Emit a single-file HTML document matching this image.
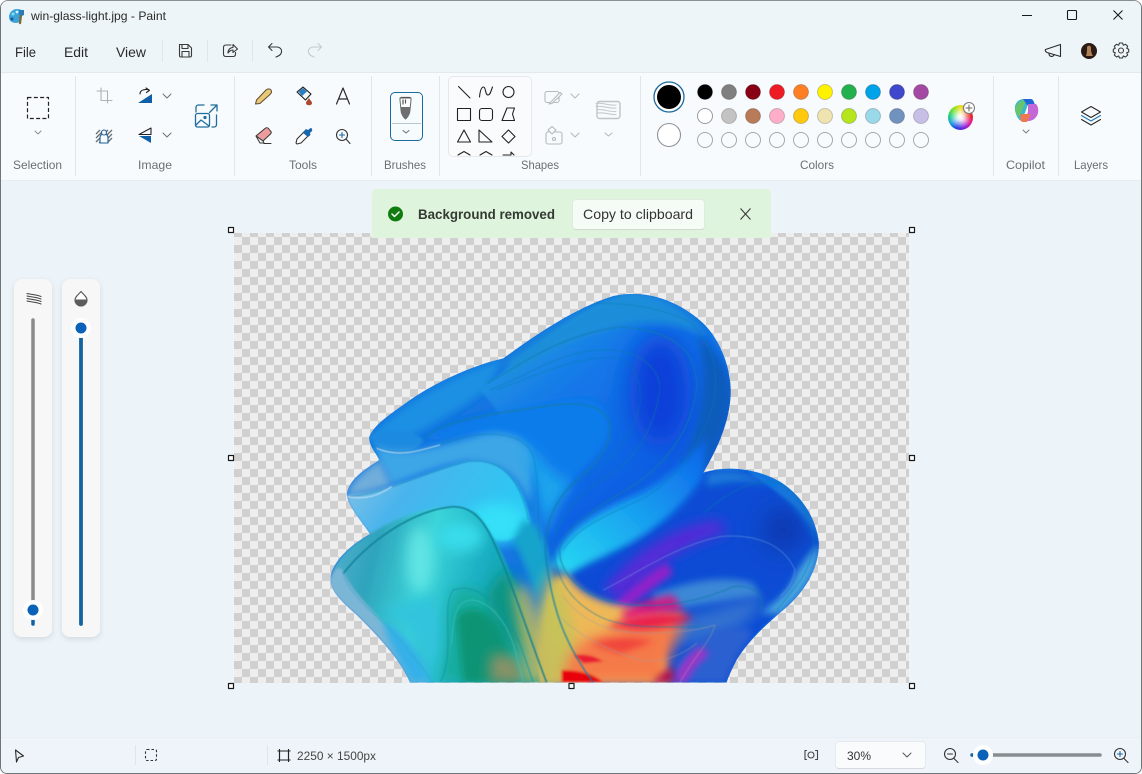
<!DOCTYPE html>
<html><head><meta charset="utf-8"><title>win-glass-light.jpg - Paint</title>
<style>
html,body{margin:0;padding:0;background:#fff;}
body{width:1142px;height:774px;overflow:hidden;position:relative;font-family:"Liberation Sans",sans-serif;}
#win{position:absolute;left:0;top:0;width:1142px;height:774px;box-sizing:border-box;border:1px solid #6f767a;border-top-color:#8b8f92;border-radius:8px 8px 7px 7px;overflow:hidden;background:#edf4f9;}
.abs{position:absolute;}
#title{left:0;top:0;width:1142px;height:71px;background:#eef5f8;}
#ribbon{left:0;top:71px;width:1142px;height:109px;background:#f8fbfe;border-top:1px solid #e3e8eb;border-bottom:1px solid #e8edf1;box-sizing:border-box;}
#canvasbg{left:0;top:180px;width:1142px;height:557px;background:#edf4f9;}
#status{left:0;top:736px;width:1142px;height:38px;background:#eef4f9;border-top:1px solid #e9eff4;box-sizing:border-box;}
#checker{left:233px;top:232px;width:675px;height:450px;background-color:#eeeeee;background-image:repeating-conic-gradient(#d0d0d0 0 25%,#eeeeee 0 50%);background-size:16px 16px;background-position:0 4px;}
#notif{left:371px;top:188px;width:399px;height:49px;background:#dff4dd;border-radius:4px 4px 0 0;}
#copybtn{left:571px;top:198px;width:133px;height:31px;box-sizing:border-box;background:#f5fcf5;border:1px solid #e0ebe0;border-bottom-color:#cfdccf;border-radius:4px;}
.panel{background:#f7f7f7;border-radius:8px;box-shadow:0 2px 6px rgba(60,80,100,.16);}
#p1{left:13px;top:278px;width:38px;height:358px;}
#p2{left:61px;top:278px;width:38px;height:358px;}
#shapes{left:447px;top:75px;width:84px;height:81px;box-sizing:border-box;background:#f9fbfd;border:1px solid #e6e9ec;border-radius:5px;}
#brush{left:389px;top:91px;width:33px;height:49px;box-sizing:border-box;background:#f6fbfe;border:1px solid #1b6a9e;border-radius:5px;}
#zoomsel{left:834px;top:740px;width:91px;height:28px;box-sizing:border-box;background:#f9fbfd;border:1px solid #e6eaee;border-bottom-color:#d6dade;border-radius:4px;}
#wheel{left:947px;top:104px;width:25px;height:25px;border-radius:50%;background:radial-gradient(circle,#fff 0,rgba(255,255,255,.85) 18%,rgba(255,255,255,0) 62%),conic-gradient(from 0deg,#f0e020,#f08020,#e82020,#e020a0,#8020e0,#2040e0,#20a0e0,#20d080,#80e020,#f0e020);}
#art{left:319px;top:279px;width:510px;height:410px;}
svg text{font-family:"Liberation Sans",sans-serif;}
</style></head><body>
<div id="win">
<div class="abs" id="title"></div>
<div class="abs" id="ribbon"></div>
<div class="abs" id="canvasbg"></div>
<div class="abs" id="status"></div>
<div class="abs" id="checker"></div>

<svg class="abs" id="art" width="510" height="410" viewBox="0 0 1530 1230">
<defs>
<clipPath id="sil"><path d="M270 1208C240 1140 190 1085 110 1005C60 960 25 930 32 885C45 835 100 790 150 762C125 725 85 680 80 645C85 600 130 570 178 540C165 515 145 495 148 470C165 430 215 400 270 360C350 305 460 255 550 235C640 170 760 85 880 48C980 25 1080 65 1150 130C1210 190 1235 280 1232 345C1228 430 1190 510 1150 578C1220 555 1310 565 1380 605C1450 650 1490 720 1497 790C1497 870 1450 940 1390 990C1330 1040 1280 1090 1250 1140C1235 1170 1225 1190 1220 1208Z"/></clipPath>
<filter id="b4" x="-10%" y="-10%" width="120%" height="120%"><feGaussianBlur stdDeviation="4"/></filter>
<filter id="b1" x="-5%" y="-5%" width="110%" height="110%"><feGaussianBlur stdDeviation="1.5"/></filter>
<filter id="b10" x="-30%" y="-30%" width="160%" height="160%"><feGaussianBlur stdDeviation="10"/></filter>
<filter id="b20" x="-40%" y="-40%" width="180%" height="180%"><feGaussianBlur stdDeviation="20"/></filter>
<filter id="b40" x="-60%" y="-60%" width="220%" height="220%"><feGaussianBlur stdDeviation="40"/></filter>
<filter id="b60" x="-80%" y="-80%" width="260%" height="260%"><feGaussianBlur stdDeviation="60"/></filter>
<linearGradient id="up" x1="0.2" y1="0" x2="0.75" y2="0.75"><stop offset="0" stop-color="#2aa0e0"/><stop offset=".4" stop-color="#1478e8"/><stop offset="1" stop-color="#0c58e0"/></linearGradient>
<linearGradient id="band" x1="0" y1="0" x2="1" y2="0.3"><stop offset="0" stop-color="#8cc4e6"/><stop offset=".4" stop-color="#49b4ec"/><stop offset="1" stop-color="#2cc8f4"/></linearGradient>
<linearGradient id="teal" x1="0" y1="0" x2="1" y2="0.2"><stop offset="0" stop-color="#5cb0d0"/><stop offset=".25" stop-color="#2ea4bc"/><stop offset=".5" stop-color="#3cd4d8"/><stop offset=".75" stop-color="#1cb0c4"/><stop offset="1" stop-color="#0a9aa0"/></linearGradient>
<linearGradient id="fan" x1="0" y1="1" x2="1" y2="0"><stop offset="0" stop-color="#28dcf2"/><stop offset=".5" stop-color="#18a0f0"/><stop offset="1" stop-color="#0c60ea"/></linearGradient>
</defs>
<g clip-path="url(#sil)">
<g filter="url(#b4)">
<rect x="0" y="0" width="1530" height="1230" fill="#1274e0"/>
<path d="M480 330C600 240 760 80 930 40C1080 40 1240 200 1232 345C1228 500 1150 620 1000 720C880 800 760 820 700 860C640 700 640 500 480 330Z" fill="url(#up)"/>
<ellipse cx="1020" cy="330" rx="90" ry="170" fill="#0a3cd8" filter="url(#b40)"/>
<path d="M1130 160C1190 220 1235 280 1232 345C1228 430 1190 510 1150 578L1080 560C1150 430 1170 280 1130 160Z" fill="#0a5cbc" filter="url(#b10)"/>
<path d="M560 240C680 160 800 60 930 40C1040 50 1120 100 1160 170C1020 90 800 120 560 300Z" fill="#1f8fd8" opacity=".9" filter="url(#b10)"/>
<path d="M148 470C215 400 350 300 550 235L500 330C420 390 310 450 180 520Z" fill="#1f90e2" filter="url(#b10)"/>
<path d="M320 470C430 410 620 380 770 360C850 350 880 420 860 480C820 560 740 600 680 690C660 600 620 480 480 470C420 460 360 480 320 480Z" fill="#0f7ceb" filter="url(#b10)"/>
<path d="M150 470C190 440 280 450 310 480C300 510 230 530 175 510Z" fill="#1f8ae0"/>
<path d="M178 540C170 515 165 510 170 500C260 535 380 490 500 460C590 450 630 490 640 530L630 680C600 590 540 540 430 545C350 560 280 590 215 615Z" fill="#3ea6e6" filter="url(#b10)"/>
<path d="M610 480C680 560 720 620 760 600C720 660 690 700 680 780C660 700 640 580 610 480Z" fill="#1aa4ec" filter="url(#b20)"/>
<path d="M80 645C200 640 330 570 440 545C540 530 610 600 630 730C590 790 520 810 450 720C380 680 260 700 150 762C120 725 85 680 80 645Z" fill="url(#band)"/>
<path d="M80 640C100 590 150 560 178 540L215 615C170 630 130 640 85 650Z" fill="#7ab4da" filter="url(#b10)" opacity=".9"/>
<ellipse cx="530" cy="730" rx="90" ry="60" fill="#35e0f8" filter="url(#b20)"/>
<path d="M610 720C650 730 680 760 690 880L650 960C630 880 600 820 580 780Z" fill="#14a4cc" filter="url(#b10)"/>
<path d="M700 860C780 780 1000 700 1160 570L1280 570C1340 620 1490 700 1497 790C1497 870 1450 940 1390 990C1300 1060 1250 1130 1220 1208L800 1208C720 1100 700 960 700 860Z" fill="#0c4cd4"/>
<ellipse cx="1390" cy="750" rx="60" ry="60" fill="#0a34a8" filter="url(#b40)"/>
<path d="M1160 580C1260 550 1400 600 1497 790C1497 760 1470 690 1400 630C1320 600 1240 600 1160 620Z" fill="#1e78d8" filter="url(#b10)"/>
<path d="M1430 880C1460 830 1490 800 1497 790C1495 880 1450 940 1380 1000L1320 1000C1380 960 1410 930 1430 880Z" fill="#4aa8e0" filter="url(#b10)"/>
<path d="M700 860C720 760 820 700 960 640C1060 590 1110 520 1160 470L1150 590C1090 680 1000 760 880 815C830 840 780 860 745 885Z" fill="url(#fan)" filter="url(#b10)"/>
<path d="M850 930C920 840 1040 740 1200 720L1220 760C1100 780 990 870 900 960Z" fill="#6a24d8" opacity=".85" filter="url(#b20)"/>
<path d="M880 975C950 910 1000 870 1040 850L1060 880C1010 915 950 965 900 995Z" fill="#b414c8" opacity=".8" filter="url(#b10)"/>
<path d="M1000 940C1100 910 1200 880 1300 910L1320 950C1220 960 1100 980 1000 1000Z" fill="#5cb0d8" opacity=".6" filter="url(#b10)"/>
<path d="M1060 1020C1150 1000 1250 960 1330 950C1320 1010 1240 1060 1180 1090L1050 1090Z" fill="#3070d0" filter="url(#b20)"/>
<path d="M740 880C780 950 860 980 1000 990L1100 1000C1040 1030 1000 1100 1060 1208L640 1208C660 1100 680 960 700 900Z" fill="#eeb858" filter="url(#b10)"/>
<path d="M700 860C740 950 760 1000 780 1208L620 1208C640 1100 650 960 700 860Z" fill="#c8c25a" filter="url(#b20)"/>
<path d="M780 1090C860 1050 980 1020 1100 1020C1070 1080 1040 1130 1030 1208L730 1208C730 1160 750 1120 780 1090Z" fill="#f57a48" filter="url(#b20)"/>
<path d="M860 1040C950 1000 1040 990 1120 1010C1090 1030 1020 1050 950 1050Z" fill="#e8104c" filter="url(#b10)" opacity=".85"/>
<path d="M900 1000C950 970 1000 950 1060 945L1090 990C1020 1000 960 1010 920 1020Z" fill="#e0107c" filter="url(#b10)" opacity=".85"/>
<path d="M810 1090C880 1070 950 1070 1000 1085L900 1120Z" fill="#f03038" opacity=".75" filter="url(#b10)"/>
<path d="M725 1170C780 1170 830 1185 850 1208L725 1208Z" fill="#e80010"/>
<path d="M760 1125C800 1120 830 1130 850 1145L790 1150Z" fill="#e81030" opacity=".9"/>
<path d="M1040 1208C1070 1140 1110 1100 1180 1050C1240 1040 1280 1040 1300 1060C1260 1110 1230 1160 1220 1208Z" fill="#2a60d0" filter="url(#b10)"/>
<path d="M1060 1208C1080 1150 1110 1120 1140 1100L1170 1120C1130 1150 1110 1180 1100 1208Z" fill="#a030c8" filter="url(#b10)"/>
<path d="M1000 1208C1020 1180 1040 1170 1060 1160L1060 1208Z" fill="#b00850" filter="url(#b10)"/>
<path d="M30 900C45 835 100 790 150 762C260 690 400 660 470 700C530 770 590 900 650 1100L660 1208L270 1208C240 1140 190 1085 110 1005C60 960 25 930 32 885Z" fill="url(#teal)"/>
<path d="M30 900C40 870 60 850 72 880C110 960 180 1000 240 1100C270 1150 300 1190 330 1208L270 1208C240 1140 190 1085 110 1005C60 960 25 930 30 900Z" fill="#7cb6d6"/>
<path d="M190 1020C260 1060 320 1140 340 1208L270 1208C240 1140 200 1090 190 1020Z" fill="#34b0e8" filter="url(#b10)"/>
<ellipse cx="300" cy="840" rx="40" ry="100" fill="#60e4e4" filter="url(#b20)"/>
<ellipse cx="420" cy="770" rx="70" ry="45" fill="#38dcea" filter="url(#b20)"/>
<path d="M180 1000C240 1020 320 1090 340 1208L380 1208C400 1100 360 1000 350 950C280 950 220 970 180 1000Z" fill="#30c4dc" filter="url(#b20)"/>
<path d="M350 1208C400 1080 360 950 420 925C490 910 570 990 600 1100L640 1208Z" fill="#18ac9e" filter="url(#b20)"/>
<path d="M410 1010C440 970 510 980 550 1060L590 1208L430 1208Z" fill="#0a9474" filter="url(#b10)"/>
<path d="M510 1130C550 1110 600 1120 620 1208L510 1208Z" fill="#8a9268" filter="url(#b20)"/>
<path d="M500 960C520 880 560 860 590 900L640 1100L560 1100Z" fill="#0a9484" filter="url(#b20)"/>
<path d="M620 920C650 980 680 1100 700 1208L620 1208C610 1100 590 1000 580 920Z" fill="#c8b860" filter="url(#b20)" opacity=".85"/>
</g>
<g fill="none" stroke="#0f7ca8" stroke-opacity=".45" stroke-width="3" filter="url(#b1)">
<path d="M170 500C260 540 330 500 440 470C540 450 620 470 640 530C660 620 650 700 660 780"/>
<path d="M85 650C200 640 300 580 440 545C540 530 600 590 625 720"/>
<path d="M70 880C150 780 280 690 400 680C480 680 510 760 540 830C590 950 620 1050 680 1208" stroke="#0a7c90" stroke-opacity=".85" stroke-width="5"/>
<path d="M315 480C330 440 450 410 600 390C720 370 840 350 870 430C880 520 790 580 740 630C680 700 670 780 680 850C700 1000 740 1100 820 1208" stroke-width="5" stroke-opacity=".7"/>
<path d="M500 310C600 260 700 170 900 140C1000 150 1130 170 1130 320C1120 430 1050 560 900 640C820 690 740 740 720 800C710 880 790 950 900 970C1030 990 1150 960 1240 920C1310 910 1340 960 1320 990" stroke-width="4" stroke-opacity=".6"/>
<path d="M510 330C640 280 740 200 880 210C970 220 1020 270 1020 330C1000 450 950 540 860 590C780 640 720 710 700 780C700 880 740 960 840 1010C920 1050 1050 1040 1180 1040" stroke-width="3" stroke-opacity=".55"/>
<path d="M530 330C640 290 780 220 900 235C950 260 965 320 960 370C945 450 890 530 800 590"/>
<path d="M700 90C800 60 960 60 1100 120C1170 170 1195 260 1185 340C1170 440 1100 570 980 650C880 700 780 730 730 810"/>
<path d="M720 1010C780 1070 860 1110 960 1140C1020 1150 1080 1130 1130 1090" stroke="#a0a0a0"/>
<path d="M730 950C790 1030 880 1060 980 1060C1060 1060 1140 1050 1185 1035C1170 1090 1120 1130 1080 1208" stroke="#a0a0a0"/>
<path d="M1150 700C1210 650 1280 600 1360 605C1440 630 1480 720 1480 800C1470 880 1420 930 1370 990" stroke-width="3.500"/>
<path d="M850 930C950 880 1060 800 1200 770C1300 760 1390 790 1425 870C1420 900 1410 920 1380 950" stroke="#7ab0e0"/>
<path d="M360 1208C410 1120 360 980 400 930C480 900 570 1000 610 1120L640 1208" stroke="#1294a4" stroke-opacity=".8"/>
<path d="M395 1090C400 1000 410 960 460 960C520 970 570 1040 590 1130L610 1208" stroke="#40c0c0" stroke-opacity=".7"/>
<path d="M70 880C85 950 180 1010 240 1080C290 1140 320 1180 340 1208" stroke="#30a0c8"/>
<path d="M80 650C130 660 170 650 215 620M170 505C240 535 300 510 360 495" stroke="#e8f4fc" stroke-opacity=".7"/>
</g>
</g>
</svg>

<div class="abs" id="notif"></div>
<div class="abs" id="copybtn"></div>
<div class="abs panel" id="p1"></div>
<div class="abs panel" id="p2"></div>
<div class="abs" id="shapes"></div>
<div class="abs" id="brush"></div>
<div class="abs" id="zoomsel"></div>
<div class="abs" id="wheel"></div>

<svg class="abs" style="left:-1px;top:-1px" width="1142" height="774" viewBox="0 0 1142 774" fill="none" stroke-linecap="round" stroke-linejoin="round">
<!-- app icon -->
<path d="M9 17C9 12 13 9 17 9C21 9 24 11 24 14C24 16 21 16 20 18C20 20 20 23 16 23C12 23 9 21 9 17Z" fill="#3ba3d8" stroke="none"/>
<circle cx="13" cy="14" r="1.500" fill="#7fe0e8"/><circle cx="17" cy="12" r="1.400" fill="#d8f0f8"/><circle cx="12" cy="19" r="1.500" fill="#185a9e"/>
<path d="M21 14L20 23" stroke="#7a6a3a" stroke-width="2.400"/><rect x="19" y="10" width="5" height="5" fill="#2c7cb8" stroke="none"/>

<!-- text -->
<g stroke="none" fill="#2a2a2a">
<text x="31" y="20" font-size="12" textLength="135" lengthAdjust="spacingAndGlyphs">win-glass-light.jpg - Paint</text>
<text x="15" y="57" font-size="14" textLength="21" lengthAdjust="spacingAndGlyphs">File</text>
<text x="64" y="57" font-size="14" textLength="24" lengthAdjust="spacingAndGlyphs">Edit</text>
<text x="116" y="57" font-size="14" textLength="30" lengthAdjust="spacingAndGlyphs">View</text>
</g>
<g stroke="none" fill="#6a6f73" font-size="12">
<text x="13" y="169" textLength="49" lengthAdjust="spacingAndGlyphs">Selection</text>
<text x="138" y="169" textLength="34" lengthAdjust="spacingAndGlyphs">Image</text>
<text x="289" y="169" textLength="28" lengthAdjust="spacingAndGlyphs">Tools</text>
<text x="384" y="169" textLength="42" lengthAdjust="spacingAndGlyphs">Brushes</text>
<text x="521" y="169" textLength="38" lengthAdjust="spacingAndGlyphs">Shapes</text>
<text x="800" y="169" textLength="34" lengthAdjust="spacingAndGlyphs">Colors</text>
<text x="1006" y="169" textLength="39" lengthAdjust="spacingAndGlyphs">Copilot</text>
<text x="1074" y="169" textLength="34" lengthAdjust="spacingAndGlyphs">Layers</text>
</g>
<text x="418" y="219" font-size="13.500" font-weight="bold" fill="#333a33" stroke="none" textLength="137" lengthAdjust="spacingAndGlyphs">Background removed</text>
<text x="583" y="219" font-size="14" fill="#333" stroke="none" textLength="110" lengthAdjust="spacingAndGlyphs">Copy to clipboard</text>
<text x="297" y="760" font-size="12" fill="#444" stroke="none" textLength="79" lengthAdjust="spacingAndGlyphs">2250 × 1500px</text>
<text x="847" y="760" font-size="12" fill="#333" stroke="none" textLength="24" lengthAdjust="spacingAndGlyphs">30%</text>

<!-- dividers -->
<g stroke="#e1e6ea" stroke-linecap="butt">
<path d="M162.500 40V62M207.500 40V62M252.500 40V62"/>
<path d="M75.500 76V176M234.500 76V176M371.500 76V176M439.500 76V176M640.500 76V176M993.500 76V176M1058.500 76V176"/>
<path d="M135.500 745V765M267.500 745V765" stroke="#dfe5ea"/>
</g>

<!-- quick access -->
<g stroke="#3a3a3a" stroke-width="1.100">
<path d="M179.500 44.500H188L191.500 48V55.500C191.500 56.500 191 57 190 57H181C180 57 179.500 56.500 179.500 55.500Z"/><path d="M182 44.500V48.500H188V44.500M182 57V51.500H189V57"/>
<path d="M231 45H226C224.500 45 223.500 46 223.500 47.500V54C223.500 55.500 224.500 56.500 226 56.500H233C234.500 56.500 235.500 55.500 235.500 54V52.500"/>
<path d="M228 53C228 49.500 230.500 47.500 233 47.500V44.500L237.500 49L233 52.500V50C231 50 229.500 51 228 53Z"/>
<path d="M272 43.500L268.500 47L272 50.500M268.500 47H277C280 47 282 49.500 281.500 52C281 55 278.500 56 276 57"/>
<path d="M318 43.500L321.500 47L318 50.500M321.500 47H313C310 47 308 49.500 308.500 52C309 55 311.500 56 314 57" stroke="#c6cacd"/>
</g>

<!-- window controls -->
<g stroke="#1a1a1a" stroke-width="1.100" stroke-linecap="butt">
<path d="M1022 15.500H1032"/>
<rect x="1067.500" y="10.500" width="9" height="9" rx="1"/>
<path d="M1113.500 10.500L1122.500 19.500M1122.500 10.500L1113.500 19.500"/>
</g>
<!-- megaphone, avatar, gear -->
<g stroke="#2b2b2b" stroke-width="1.100">
<path d="M1045.500 49.500L1060.500 44.500V56.500L1047 52.500C1045 51.500 1045 50 1045.500 49.500Z"/><path d="M1049 53.500C1049 57.500 1054 57 1054 54.500"/>
</g>
<circle cx="1089" cy="51" r="8" fill="#2a1c14" stroke="none"/><path d="M1087 47C1088 45 1091 45 1091 48C1091 50 1091 53 1093 56H1086C1087 53 1087 50 1087 47Z" fill="#b08058" stroke="none"/>
<g stroke="#3a3a3a" stroke-width="1.100">
<circle cx="1121" cy="50.500" r="2.500"/>
<path d="M1119.500 43H1122.500L1123.300 45.200L1125.500 44.300L1127.700 46.300L1126.700 48.400L1128.700 49.300V52L1126.700 52.800L1127.700 55L1125.500 57L1123.300 56L1122.500 58H1119.500L1118.700 56L1116.500 57L1114.300 55L1115.300 52.800L1113.300 52V49.300L1115.300 48.400L1114.300 46.300L1116.500 44.300L1118.700 45.200Z"/>
</g>

<!-- selection -->
<rect x="27.500" y="97.500" width="21" height="21" stroke="#222" stroke-width="1.200" stroke-dasharray="4 2.300" stroke-linecap="butt"/>
<path d="M35 131L38 134L41 131" stroke="#8a8f92"/>

<!-- image group -->
<g stroke="#aeb2b5" stroke-width="1.100"><path d="M97 91H107.500V103M101 88V100.500H112"/></g>
<path d="M138 103L152 94V103Z" fill="#0f5ea8" stroke="none"/>
<path d="M140 94C140 89 147 89 149 90M146 88L149.500 90.300L146.500 92.500" stroke="#222" stroke-width="1.100"/>
<path d="M163 94L167 98L171 94M163 133L167 137L171 133" stroke="#6e7376"/>
<path d="M151 128L139 134.500H151Z" stroke="#222" stroke-width="1.100"/>
<path d="M139 136H151V143Z" fill="#0f5ea8" stroke="none"/>
<g stroke="#6a6f72" stroke-width="1.300" stroke-linecap="butt"><path d="M96 134L100 130M96 138L104 130M96 142L108 130M99 143L112 130M103 143L112 134M107 143L112 138"/></g>
<path d="M100 143V138C100 135 102 134 104 134C106 134 108 135 108 138V143Z" fill="#f8fbfe" stroke="#1a5f96" stroke-width="1.100"/>
<circle cx="104" cy="132.500" r="2.500" fill="#f8fbfe" stroke="#1a5f96" stroke-width="1.100"/>
<g stroke="#1f6d9e" stroke-width="1.300">
<path d="M196 112V107.500C196 106 197 105 198.500 105H204"/>
<path d="M212 127H214C215.500 127 216.500 126 216.500 124.500V115"/>
<path d="M211 105H217V111M217 105L209.500 112.500"/>
<rect x="195.500" y="113.500" width="14" height="13.500" rx="2"/>
<path d="M196 125L201 120L209 126"/><circle cx="205" cy="117.500" r="1" fill="#1f6d9e"/>
</g>

<!-- tools -->
<path d="M255.500 104L256.500 100L266 90C267.500 88.500 270 88.500 271 90C272 91.500 271.500 93 270 94.500L260 103.500Z" fill="#e9c877" stroke="#5a4c30" stroke-width="1"/>
<path d="M297 92L303 87L311 94L305.500 100Z" fill="#f4f6f8" stroke="#1c1c1c" stroke-width="1.100"/>
<path d="M298.500 91.500L303 88L307 91.500L302 96Z" fill="#2a7ec4" stroke="none"/>
<path d="M309 98C308 100 306 101.500 306 103C306 106 312 106 312 103C312 101.500 310 100 309 98Z" fill="#a8492c" stroke="none"/>
<path d="M336.500 104L343 88L349.500 104M338.800 99H347.200" stroke="#2a2a2a" stroke-width="1.200"/>
<path d="M256 136L265 128.500C266 127.500 267.500 127.500 268.500 128.500L270.500 131C271.500 132 271.500 133 270.500 134L263 141Z" fill="#ec9c9c" stroke="#333" stroke-width="1"/>
<path d="M256 136L260 143H264L263 141Z" fill="#f5f5f5" stroke="#333" stroke-width="1"/><path d="M264 143.500H271" stroke="#333"/>
<path d="M297 144L296 143L297 139L304 132L308 136L301 143Z" fill="#fff" stroke="#333" stroke-width="1.100"/>
<path d="M302.500 132.500L306 129L308 130L310.500 128C312 128 312.500 129.500 312 131L310 133L310.500 135L308 137Z" fill="#1a66a8" stroke="none"/>
<g stroke="#333" stroke-width="1.100"><circle cx="342" cy="135" r="5.500"/><path d="M346 139L350 143.500"/><path d="M342 132.500V137.500M339.500 135H344.500" stroke="#1a66a8"/></g>

<!-- brush -->
<path d="M400 98H411V100L410 110C410 114 407 118 405.500 119C404 118 401 114 401 110L400 100Z" fill="#fff" stroke="#666" stroke-width="1"/>
<path d="M401 107H410L410 110C410 114 407 118 405.500 119C404 118 401 114 401 110Z" fill="#6f6f6f" stroke="none"/>
<path d="M401 97.500H410M403 100V104M405.500 100V103" stroke="#555" stroke-width="1.200"/>
<path d="M392 123.500H421" stroke="#b9c6ce" stroke-linecap="butt"/>
<path d="M403 130.500L406 133L409 130.500" stroke="#6a7073"/>

<!-- shapes -->
<g stroke="#222" stroke-width="1.100">
<path d="M458.500 86.500L470 98"/>
<path d="M479.500 97C480 92 481 87 483.500 87C486 87 485 95 488 95C490.500 95 491.500 89 492.500 87"/>
<circle cx="508.500" cy="92" r="5.500"/>
<rect x="457.500" y="108.500" width="13" height="12"/>
<rect x="479.500" y="108.500" width="13" height="12" rx="2.500"/>
<path d="M502 120.500L507 108H514.500L512.500 114L514.500 120.500Z"/>
<path d="M464 130L470.500 142H457.500Z"/>
<path d="M479 130V142H492Z"/>
<path d="M508.500 130L515 136.500L508.500 143L502 136.500Z"/>
<path d="M458 155L464 151.500L470 155M480 155L486 151.500L492 155M503 155H511L511 152L514 155"/>
</g>
<g stroke="#b6babd" stroke-width="1.100">
<rect x="545" y="91.500" width="14" height="11" rx="2"/><path d="M549 104L560 92.500L562 94L552 103.500Z" fill="#f8fbfd"/>
<path d="M571 94L575 98L579 94M571 133L575 137L579 133M605 133L608.500 136L612 133"/>
<rect x="546" y="132" width="16" height="12" rx="2"/><path d="M548 130L552 126.500L556 130L552 134Z" fill="#f8fbfd"/><circle cx="554" cy="139" r="1.500"/>
<rect x="597" y="101.500" width="23" height="17" rx="2.500" stroke="#bfc3c6" stroke-width="1.400"/>
<path d="M596 103.500C603 102.500 610 106 616 105M596 106.500C603 105.500 610 109 616 108M597 109.500C603 109 610 112 616 111.500M598 113C604 112 610 115 616 114.500" stroke="#c6cacd"/>
</g>

<!-- colors -->
<circle cx="669" cy="97" r="15" stroke="#1b6a9e" stroke-width="1.300" fill="#fff"/>
<circle cx="669" cy="97" r="12" fill="#000" stroke="none"/>
<circle cx="669" cy="135" r="11.500" fill="#fff" stroke="#8f9396" stroke-width="1.100"/>
<g stroke-width="1" stroke="#00000033">
<circle cx="705" cy="92" r="7.500" fill="#000"/><circle cx="729" cy="92" r="7.500" fill="#7f7f7f"/><circle cx="753" cy="92" r="7.500" fill="#880015"/><circle cx="777" cy="92" r="7.500" fill="#ed1c24"/><circle cx="801" cy="92" r="7.500" fill="#ff7f27"/><circle cx="825" cy="92" r="7.500" fill="#fff200"/><circle cx="849" cy="92" r="7.500" fill="#22b14c"/><circle cx="873" cy="92" r="7.500" fill="#00a2e8"/><circle cx="897" cy="92" r="7.500" fill="#3f48cc"/><circle cx="921" cy="92" r="7.500" fill="#a349a4"/>
<circle cx="705" cy="116" r="7.500" fill="#fff" stroke="#9a9a9a"/><circle cx="729" cy="116" r="7.500" fill="#c3c3c3"/><circle cx="753" cy="116" r="7.500" fill="#b97a57"/><circle cx="777" cy="116" r="7.500" fill="#ffaec9"/><circle cx="801" cy="116" r="7.500" fill="#ffc90e"/><circle cx="825" cy="116" r="7.500" fill="#efe4b0"/><circle cx="849" cy="116" r="7.500" fill="#b5e61d"/><circle cx="873" cy="116" r="7.500" fill="#99d9ea"/><circle cx="897" cy="116" r="7.500" fill="#7092be"/><circle cx="921" cy="116" r="7.500" fill="#c8bfe7"/>
</g>
<g stroke="#a4a8ab" stroke-width="1" fill="none">
<circle cx="705" cy="140" r="7.500"/><circle cx="729" cy="140" r="7.500"/><circle cx="753" cy="140" r="7.500"/><circle cx="777" cy="140" r="7.500"/><circle cx="801" cy="140" r="7.500"/><circle cx="825" cy="140" r="7.500"/><circle cx="849" cy="140" r="7.500"/><circle cx="873" cy="140" r="7.500"/><circle cx="897" cy="140" r="7.500"/><circle cx="921" cy="140" r="7.500"/>
</g>
<circle cx="969" cy="108" r="5.500" fill="#fff" stroke="#777" stroke-width="1"/>
<path d="M966 108H972M969 105V111" stroke="#666" stroke-width="1"/>

<!-- copilot -->
<path d="M1015 110C1014 104 1018 99 1024 99H1030L1026 110L1022 121C1019 121 1016 116 1015 110Z" fill="#3cb8c8" stroke="none"/>
<path d="M1015 108C1015 112 1016 115 1019 117L1023 108L1026 100C1021 100 1017 103 1015 108Z" fill="#70c858" stroke="none" opacity=".8"/>
<path d="M1023 99H1031C1033 99 1034 102 1035 105L1027 105Z" fill="#2068d8" stroke="none"/>
<path d="M1028 104H1036C1039 107 1039 114 1036 117C1034 120 1031 121 1028 121L1024 121L1028 112Z" fill="#c468d8" stroke="none"/>
<path d="M1021 114L1031 114L1027 122H1022C1020 120 1020 117 1021 114Z" fill="#f07850" stroke="none"/>
<path d="M1023 130L1026 133L1029 130" stroke="#7a7f82"/>
<!-- layers -->
<path d="M1091 106.500L1100.500 112L1091 117.500L1081.500 112Z" stroke="#2a2a2a" stroke-width="1.100"/>
<path d="M1081.500 115.500L1091 121L1100.500 115.500" stroke="#1f78b8" stroke-width="1.100"/>
<path d="M1081.500 119.500L1091 125L1100.500 119.500" stroke="#2a2a2a" stroke-width="1.100"/>

<!-- notification icons -->
<circle cx="395.500" cy="214" r="7.500" fill="#107c10" stroke="none"/>
<path d="M392 214L394.500 216.500L399 212" stroke="#fff" stroke-width="1.500"/>
<path d="M740.500 208.500L750.500 219.500M750.500 208.500L740.500 219.500" stroke="#333" stroke-width="1" stroke-linecap="butt"/>

<!-- handles -->
<g fill="#fff" stroke="#1a1a1a" stroke-width="1.200">
<rect x="228.500" y="227.500" width="5" height="5"/><rect x="909.500" y="227.500" width="5" height="5"/>
<rect x="228.500" y="455.500" width="5" height="5"/><rect x="909.500" y="455.500" width="5" height="5"/>
<rect x="228.500" y="683.500" width="5" height="5"/><rect x="569" y="683.500" width="5" height="5"/><rect x="909.500" y="683.500" width="5" height="5"/>
</g>

<!-- left sliders -->
<path d="M27 293.500C31 294.500 37 294.500 41 296.500M27 296C31 297 37 297 41 299M27 298.500C31 299.500 37 299.500 41 301.500M27 301C31 302 37 302 41 304" stroke="#444" stroke-width="1"/>
<path d="M33 320V600" stroke="#8a8a8a" stroke-width="3.500" stroke-linecap="round"/>
<path d="M33 620V624" stroke="#0f62a8" stroke-width="3.500" stroke-linecap="round"/>
<circle cx="33" cy="610" r="10" fill="#fff" stroke="none"/><circle cx="33" cy="610" r="5.500" fill="#0a62b8" stroke="none"/>
<path d="M81 291.500C78 295 75 297 75 300C75 303.500 78 306 81 306C84 306 87 303.500 87 300C87 297 84 295 81 291.500Z" fill="#fff" stroke="#555" stroke-width="1.100"/>
<path d="M75 299.500H87V300C87 303.500 84 306 81 306C78 306 75 303.500 75 300Z" fill="#5c5c5c" stroke="none"/>
<path d="M81 335V624" stroke="#12649f" stroke-width="3.800" stroke-linecap="round"/>
<circle cx="81" cy="328" r="10" fill="#fff" stroke="none"/><circle cx="81" cy="328" r="5.500" fill="#0a62b8" stroke="none"/>

<!-- status -->
<path d="M15.500 750L23.500 756L18.500 757.500L16.500 762Z" stroke="#2a2a2a" stroke-width="1.100"/>
<rect x="145.500" y="749.500" width="11" height="11" rx="1.500" stroke="#333" stroke-width="1.100" stroke-dasharray="2.500 2" stroke-linecap="butt"/>
<g stroke="#222" stroke-width="1.100" stroke-linecap="butt"><rect x="279.500" y="751" width="9" height="9"/><path d="M277.500 751H290.500M277.500 760H290.500M279.500 749V762M288.500 749V762"/></g>
<g stroke="#444" stroke-width="1.100"><circle cx="811" cy="755" r="3"/><path d="M806.500 750.500H805V759.500H806.500M815.500 750.500H817.500V759.500H815.500"/></g>
<path d="M903 753L907 757L911 753" stroke="#555"/>
<g stroke="#333" stroke-width="1.100"><circle cx="950" cy="754" r="5.500"/><path d="M954 758.500L958 762.500"/><path d="M947.500 754H952.500"/></g>
<g stroke="#333" stroke-width="1.100"><circle cx="1120" cy="754" r="5.500"/><path d="M1124 758.500L1128 762.500"/><path d="M1117.500 754H1122.500M1120 751.500V756.500" stroke="#1a66a8"/></g>
<path d="M972 755H974" stroke="#0f62a8" stroke-width="3.500"/>
<path d="M993 755H1100" stroke="#878c90" stroke-width="3.500"/>
<circle cx="983" cy="755" r="10" fill="#fff" stroke="none"/><circle cx="983" cy="755" r="5.500" fill="#0a62b8" stroke="none"/>
</svg>
</div>
</body></html>
